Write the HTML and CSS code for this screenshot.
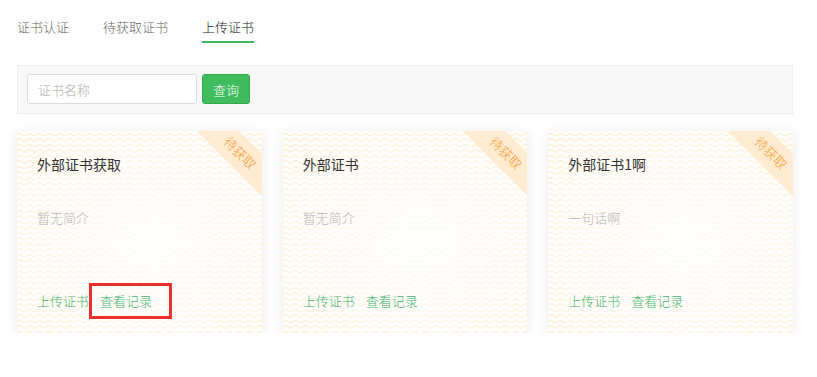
FILE: index.html
```html
<!DOCTYPE html>
<html lang="zh">
<head>
<meta charset="utf-8">
<title>上传证书</title>
<link rel="stylesheet" href="styles.css">
</head>
<body>
<div class="page">
  <nav class="tabs">
    <span class="tab">证书认证</span>
    <span class="tab">待获取证书</span>
    <span class="tab active">上传证书</span>
  </nav>
  <div class="search">
    <input class="search-input" type="text" placeholder="证书名称">
    <button class="search-btn">查询</button>
  </div>
  <div class="cards">
    <div class="card">
      <div class="ribbon">待获取</div>
      <div class="card-title">外部证书获取</div>
      <div class="card-desc">暂无简介</div>
      <div class="card-links">
        <span class="link">上传证书</span>
        <span class="link marked">查看记录<span class="mark"></span></span>
      </div>
    </div>
    <div class="card">
      <div class="ribbon">待获取</div>
      <div class="card-title">外部证书</div>
      <div class="card-desc">暂无简介</div>
      <div class="card-links">
        <span class="link">上传证书</span>
        <span class="link">查看记录</span>
      </div>
    </div>
    <div class="card">
      <div class="ribbon">待获取</div>
      <div class="card-title">外部证书1啊</div>
      <div class="card-desc">一句话啊</div>
      <div class="card-links">
        <span class="link">上传证书</span>
        <span class="link">查看记录</span>
      </div>
    </div>
  </div>
</div>
</body>
</html>
```
FILE: styles.css
```css
* { box-sizing: border-box; }
html, body { margin: 0; padding: 0; background: #fff; }
body {
  font-family: "Noto Sans CJK SC", "Noto Sans", sans-serif;
  font-size: 13px;
  font-weight: 300;
  color: #333;
}
.page {
  width: 776px;
  margin-left: 17px;
}
.tabs {
  display: flex;
  gap: 34px;
}
.tab {
  padding-top: 17px;
  padding-bottom: 4px;
  line-height: 20px;
  color: #666;
  border-bottom: 2px solid transparent;
}
.tab.active {
  color: #222;
  border-bottom-color: #3dba5c;
}
.search {
  margin-top: 22px;
  height: 49px;
  border: 1px solid #eee;
  background: #f8f8f8;
  padding: 8px 9px;
  display: flex;
  gap: 5px;
}
.search-input {
  width: 170px;
  height: 30px;
  border: 1px solid #dcdcdc;
  border-radius: 3px;
  background: #fff;
  padding: 0 10px;
  font: inherit;
  font-size: 13px;
  outline: none;
}
.search-input::placeholder { color: #aaa; }
.search-btn {
  width: 48px;
  height: 30px;
  border: 1px solid #35a84f;
  border-radius: 3px;
  background: #40bb5d;
  color: #fff;
  font: inherit;
  font-size: 13px;
  padding: 0;
}
.cards {
  margin-top: 17px;
  display: grid;
  grid-template-columns: repeat(3, 1fr);
  gap: 21px;
}
.card {
  position: relative;
  overflow: hidden;
  height: 202px;
  border-radius: 4px;
  padding: 20px 20px 22px;
  display: flex;
  flex-direction: column;
  box-shadow: 0 2px 12px rgba(0, 0, 0, 0.09);
  background:
    radial-gradient(ellipse 75% 70% at 55% 55%, rgba(255,255,255,0.85) 0%, rgba(255,255,255,0.6) 55%, rgba(255,255,255,0.15) 100%),
    url("data:image/svg+xml,%3Csvg xmlns='http://www.w3.org/2000/svg' width='10' height='5.5'%3E%3Cpath d='M0 3.5 Q2.5 1.2 5 3.5 T10 3.5' fill='none' stroke='%23fbe8bd' stroke-width='1'/%3E%3C/svg%3E"),
    #fffdf8;
}
.card-title {
  font-size: 14px;
  font-weight: 400;
  line-height: 26px;
  color: #333;
  position: relative;
}
.card-desc {
  margin-top: 31px;
  line-height: 20px;
  color: #b5b5b5;
  position: relative;
}
.card-links {
  margin-top: auto;
  display: flex;
  gap: 11px;
  line-height: 20px;
}
.link {
  color: #3fb56a;
  position: relative;
}
.mark {
  position: absolute;
  left: -11px;
  top: -8px;
  width: 83px;
  height: 36px;
  border: 3px solid #e8302c;
}
.ribbon {
  position: absolute;
  left: 163px;
  top: 7px;
  width: 120px;
  height: 30px;
  line-height: 30px;
  text-align: center;
  background: #ffebd0;
  color: #ff9a2e;
  font-size: 13px;
  transform: rotate(45deg);
}
```
